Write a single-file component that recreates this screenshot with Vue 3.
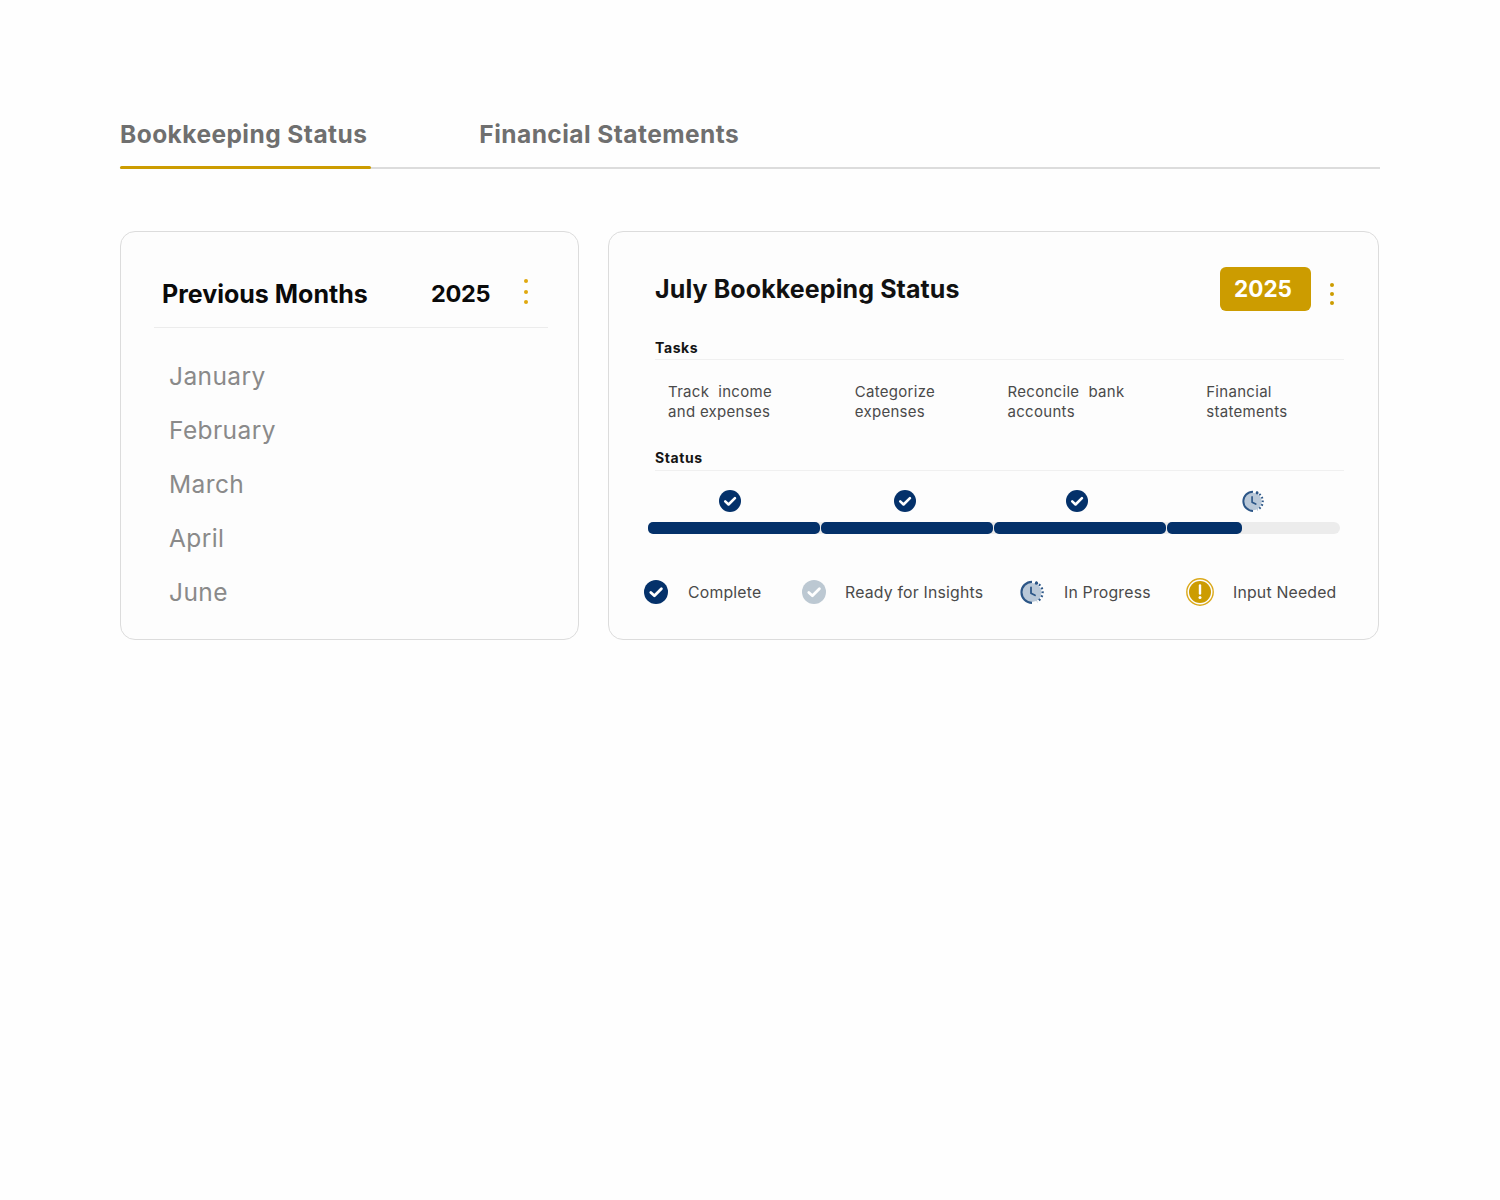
<script setup>
const months = ['January', 'February', 'March', 'April', 'June']

const tasks = [
  { lines: ['Track  income', 'and expenses'], width: '200px', pad: '13px' },
  { lines: ['Categorize', 'expenses'], width: '153px', pad: '0' },
  { lines: ['Reconcile  bank', 'accounts'], width: '199px', pad: '0' },
  { lines: ['Financial', 'statements'], width: '138px', pad: '0' }
]

const statusIcons = [
  { type: 'check', width: '175px' },
  { type: 'check', width: '172px' },
  { type: 'check', width: '176px' },
  { type: 'clock', width: '22px' }
]

const segments = [172, 172, 172, 75]

const legend = [
  { type: 'check', label: 'Complete', size: 24, gap: '20px', width: '158px' },
  { type: 'ready', label: 'Ready for Insights', size: 24, gap: '19px', width: '218px' },
  { type: 'clock', label: 'In Progress', size: 24, gap: '20px', width: '166px' },
  { type: 'alert', label: 'Input Needed', size: 28, gap: '19px', width: 'auto' }
]
</script>

<template>
  <div class="page">
    <nav class="tabs">
      <span class="tab active">Bookkeeping Status</span>
      <span class="tab">Financial Statements</span>
    </nav>

    <div class="cards">
      <section class="card months-card">
        <header class="months-head">
          <h2 class="months-title">Previous Months</h2>
          <span class="months-year">2025</span>
          <span class="dots"><i></i><i></i><i></i></span>
        </header>
        <ul class="months">
          <li v-for="m in months" :key="m">{{ m }}</li>
        </ul>
      </section>

      <section class="card status-card">
        <header class="status-head">
          <h2 class="status-title">July Bookkeeping Status</h2>
          <span class="badge">2025</span>
          <span class="dots wide"><i></i><i></i><i></i></span>
        </header>

        <h3 class="label">Tasks</h3>
        <div class="task-row">
          <p
            v-for="(t, i) in tasks"
            :key="i"
            class="task"
            :style="{ width: t.width, paddingLeft: t.pad }"
          >
            <span v-for="l in t.lines" :key="l">{{ l }}</span>
          </p>
        </div>

        <h3 class="label status-label">Status</h3>
        <div class="icon-row">
          <span
            v-for="(s, i) in statusIcons"
            :key="i"
            class="icon-cell"
            :style="{ width: s.width }"
          >
            <svg v-if="s.type === 'check'" width="22" height="22" viewBox="0 0 24 24">
              <circle cx="12" cy="12" r="12" fill="#04316a" />
              <path d="M6.8 12.4l3.6 3.4 7-7" fill="none" stroke="#fff" stroke-width="2.8" stroke-linecap="round" stroke-linejoin="round" />
            </svg>
            <svg v-else width="22" height="22" viewBox="0 0 24 24">
              <circle cx="12" cy="12.5" r="9.6" fill="#b9c8d8" />
              <path d="M12 1.8a10.4 10.4 0 1 0 0 21" fill="none" stroke="#2c5687" stroke-width="2.2" />
              <path d="M15.5 2.4a10.4 10.4 0 0 1 1.4 19.2" fill="none" stroke="#2c5687" stroke-width="2.2" stroke-dasharray="1.8 2.2" />
              <path d="M11 7.5v5.8l4 2" fill="none" stroke="#2c5687" stroke-width="1.8" stroke-linecap="round" stroke-linejoin="round" />
              <circle cx="16.5" cy="3.2" r="1.6" fill="#2c5687" />
            </svg>
          </span>
        </div>

        <div class="bar">
          <span
            v-for="(w, i) in segments"
            :key="i"
            class="seg"
            :style="{ width: w + 'px' }"
          ></span>
        </div>

        <div class="legend">
          <div
            v-for="item in legend"
            :key="item.label"
            class="legend-item"
            :style="{ width: item.width, gap: item.gap }"
          >
            <svg v-if="item.type === 'check'" :width="item.size" :height="item.size" viewBox="0 0 24 24">
              <circle cx="12" cy="12" r="12" fill="#04316a" />
              <path d="M6.8 12.4l3.6 3.4 7-7" fill="none" stroke="#fff" stroke-width="2.8" stroke-linecap="round" stroke-linejoin="round" />
            </svg>
            <svg v-else-if="item.type === 'ready'" :width="item.size" :height="item.size" viewBox="0 0 24 24">
              <circle cx="12" cy="12" r="12" fill="#bcc8d2" />
              <path d="M6.8 12.4l3.6 3.4 7-7" fill="none" stroke="#fff" stroke-width="2.8" stroke-linecap="round" stroke-linejoin="round" />
            </svg>
            <svg v-else-if="item.type === 'clock'" :width="item.size" :height="item.size" viewBox="0 0 24 24">
              <circle cx="12" cy="12.5" r="9.6" fill="#b9c8d8" />
              <path d="M12 1.8a10.4 10.4 0 1 0 0 21" fill="none" stroke="#2c5687" stroke-width="2.2" />
              <path d="M15.5 2.4a10.4 10.4 0 0 1 1.4 19.2" fill="none" stroke="#2c5687" stroke-width="2.2" stroke-dasharray="1.8 2.2" />
              <path d="M11 7.5v5.8l4 2" fill="none" stroke="#2c5687" stroke-width="1.8" stroke-linecap="round" stroke-linejoin="round" />
              <circle cx="16.5" cy="3.2" r="1.6" fill="#2c5687" />
            </svg>
            <svg v-else :width="item.size" :height="item.size" viewBox="0 0 28 28">
              <circle cx="14" cy="14" r="13.2" fill="none" stroke="#dba91a" stroke-width="1.4" />
              <circle cx="14" cy="14" r="11" fill="#cc9c00" />
              <path d="M14 7.5v8" fill="none" stroke="#fff" stroke-width="2.4" stroke-linecap="round" />
              <circle cx="14" cy="19.5" r="1.5" fill="#fff" />
            </svg>
            <span class="legend-label">{{ item.label }}</span>
          </div>
        </div>
      </section>
    </div>
  </div>
</template>

<style>
html,
body {
  background: #fefefe;
}
</style>

<style scoped>
.page {
  box-sizing: border-box;
  height: 1200px;
  padding: 116px 120px 0;
  font-family: Inter, "Open Sans", sans-serif;
}

.tabs {
  display: flex;
  gap: 112px;
  height: 51px;
  border-bottom: 2px solid #dcdcdc;
}
.tab {
  position: relative;
  height: 36px;
  font-size: 24.5px;
  line-height: 36px;
  font-weight: 700;
  color: #6f6f6f;
  letter-spacing: 0.45px;
}
.tab.active::after {
  content: "";
  position: absolute;
  left: 0;
  top: 49.5px;
  width: 251px;
  height: 3px;
  background: #cc9c00;
  border-radius: 2px;
}

.cards {
  display: flex;
  gap: 29px;
  margin-top: 62px;
}
.card {
  box-sizing: border-box;
  height: 409px;
  background: #fdfdfd;
  border: 1px solid #dcdcdc;
  border-radius: 15px;
}

.months-card {
  width: 459px;
  padding: 0 30px 0 33px;
}
.months-head {
  display: flex;
  align-items: center;
  box-sizing: border-box;
  height: 96px;
  padding: 28px 0 0 8px;
  border-bottom: 1px solid #ececec;
}
.months-title {
  width: 269px;
  margin: 0;
  font-size: 25px;
  font-weight: 700;
  color: #0a0a0a;
}
.months-year {
  width: 93px;
  font-size: 23.5px;
  font-weight: 700;
  color: #0a0a0a;
  letter-spacing: -0.3px;
}
.dots {
  display: flex;
  flex-direction: column;
  gap: 6.5px;
  margin-top: -4px;
}
.dots i {
  width: 4px;
  height: 4px;
  border-radius: 50%;
  background: #e0a80f;
}
.dots.wide {
  gap: 5px;
  margin: 16px 10px 0 19px;
}
.dots.wide i {
  background: #cc9c00;
}

.months {
  margin: 21px 0 0;
  padding: 0 0 0 15px;
  list-style: none;
}
.months li {
  height: 54px;
  font-size: 24.5px;
  line-height: 54px;
  letter-spacing: 0.4px;
  color: #8a8a8a;
}

.status-card {
  width: 771px;
  padding: 0 34px 0 46px;
}
.status-head {
  display: flex;
  align-items: flex-start;
  height: 93px;
  padding-top: 35px;
  box-sizing: border-box;
}
.status-title {
  flex: 1;
  margin: 0;
  font-size: 25px;
  line-height: 44px;
  font-weight: 700;
  color: #111;
  letter-spacing: 0.1px;
}
.badge {
  box-sizing: border-box;
  width: 91px;
  height: 44px;
  padding-right: 5px;
  border-radius: 6px;
  background: #cc9c00;
  color: #fff;
  font-size: 22.5px;
  font-weight: 700;
  line-height: 44px;
  text-align: center;
}

.label {
  margin: 13px 0 0;
  height: 19px;
  padding-bottom: 2px;
  border-bottom: 1px solid #f0f0f0;
  font-size: 14px;
  line-height: 19px;
  font-weight: 700;
  letter-spacing: 0.6px;
  color: #141414;
}
.status-label {
  margin-top: 0;
  height: 20px;
}

.task-row {
  display: flex;
  height: 88px;
  box-sizing: border-box;
  padding-top: 22px;
}
.task {
  box-sizing: border-box;
  display: flex;
  flex-direction: column;
  margin: 0;
  font-size: 15px;
  line-height: 20px;
  letter-spacing: 0.3px;
  color: #4a4a4a;
  white-space: pre;
}

.icon-row {
  display: flex;
  align-items: center;
  height: 22px;
  margin: 19px 0 0 64px;
}
.icon-cell {
  display: block;
  height: 22px;
}

.bar {
  display: flex;
  gap: 1px;
  width: 692px;
  height: 12px;
  margin: 10px 0 0 -7px;
  border-radius: 6px;
  background: #ececec;
}
.seg {
  height: 12px;
  border-radius: 5px;
  background: #04316a;
}

.legend {
  display: flex;
  align-items: center;
  height: 30px;
  margin: 43px 0 0 -11px;
}
.legend-item {
  display: flex;
  align-items: center;
  flex-shrink: 0;
}
.legend-label {
  font-size: 15.8px;
  letter-spacing: 0.2px;
  color: #4a4a4a;
  white-space: nowrap;
}
</style>
